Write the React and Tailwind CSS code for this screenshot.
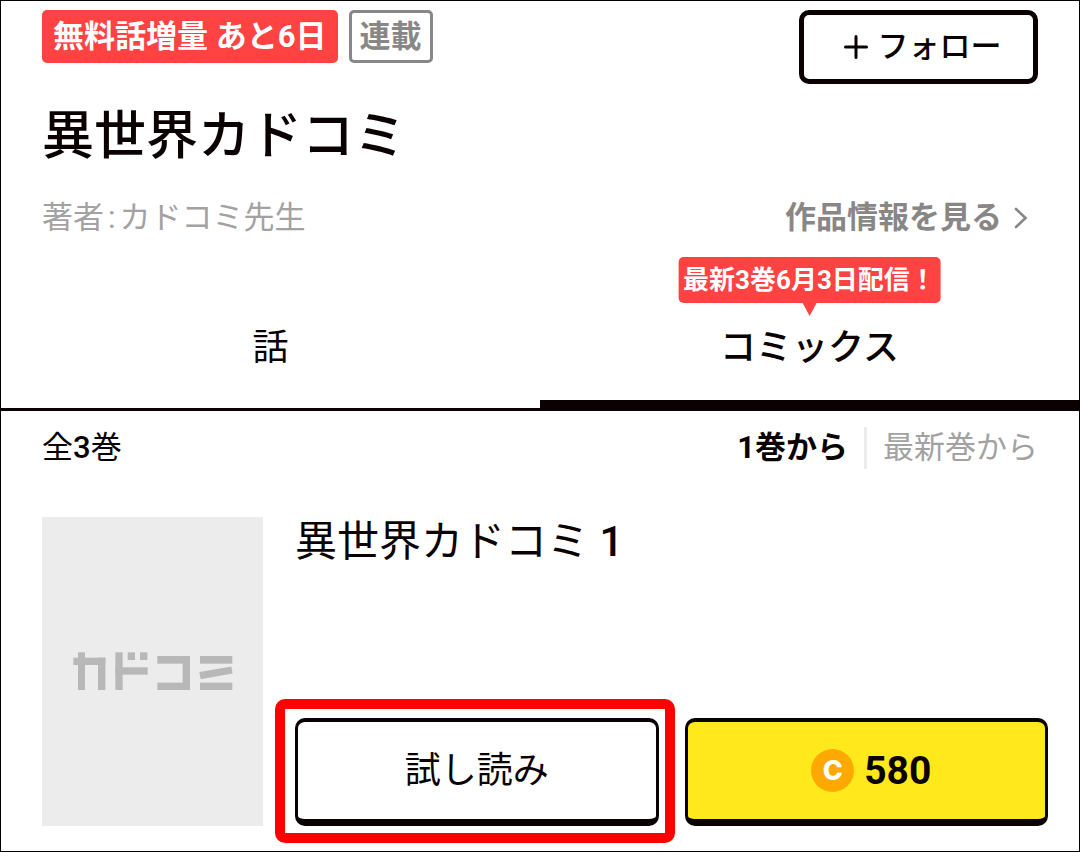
import { useState } from "react";

const CoverLogo = () => (
  <svg viewBox="128 69 480 115" className="w-[160px]" fill="#b9b8b8" role="img" aria-label="カドコミ">
    <rect x="143" y="70" width="21" height="113" />
    <rect x="129" y="86" width="96" height="22" />
    <rect x="203" y="86" width="22" height="97" />
    <rect x="255" y="70" width="22" height="113" />
    <rect x="255" y="115" width="97" height="22" />
    <rect x="292" y="70" width="22" height="23" />
    <rect x="329" y="70" width="22" height="23" />
    <rect x="381" y="81" width="98" height="23" />
    <rect x="457" y="81" width="22" height="102" />
    <rect x="381" y="161" width="98" height="22" />
    <rect x="509" y="81" width="97" height="23" />
    <line x1="509" y1="140" x2="605" y2="123" stroke="#b9b8b8" strokeWidth="22" />
    <rect x="509" y="161" width="97" height="22" />
  </svg>
);

const CoinIcon = () => (
  <span className="flex size-[43px] items-center justify-center rounded-full bg-[#ffa900] font-[Inter,sans-serif] text-[27px] leading-none font-extrabold text-white">
    C
  </span>
);

const Header = () => {
  const [following, setFollowing] = useState(false);

  return (
    <header className="px-[41px] pt-[9px]">
      <div className="flex items-start justify-between">
        <div>
          <div className="flex gap-[11px] text-[31px] leading-[53px] font-bold">
            <span className="rounded-[5px] bg-[#ff4343] px-[11px] text-white">無料話増量 あと6日</span>
            <span className="rounded-[5px] border-3 border-[#898686] px-2 leading-[47px] text-[#898686]">連載</span>
          </div>
          <h1 className="mt-11 text-[52px] leading-[60px] font-medium">異世界カドコミ</h1>
        </div>
        <button
          type="button"
          aria-pressed={following}
          onClick={() => setFollowing(!following)}
          className="flex h-[74px] w-[239px] items-center justify-center gap-[10px] rounded-[10px] border-5 border-[#0a0202] pl-2 text-[31px] leading-[40px] font-medium"
        >
          <svg viewBox="0 0 24 24" className="size-6" stroke="currentColor" strokeWidth="3" strokeLinecap="round">
            <path d="M12 1.5v21M1.5 12h21" />
          </svg>
          フォロー
        </button>
      </div>
      <div className="mt-[31px] flex items-center justify-between text-[31px] leading-[40px]">
        <p className="flex gap-1 text-[#a3a1a1]">
          <span>著者</span>
          <span>:</span>
          <span>カドコミ先生</span>
        </p>
        <a href="#info" className="flex items-center gap-3 pr-[10px] font-bold text-[#898686]">
          作品情報を見る
          <svg viewBox="0 0 14 24" className="h-6 w-[14px]" fill="none" stroke="currentColor" strokeWidth="2.6" strokeLinecap="round">
            <path d="M2 3l9.5 9L2 21" />
          </svg>
        </a>
      </div>
    </header>
  );
};

const Tabs = () => (
  <nav className="grid grid-cols-2 text-center text-[36px] leading-[50px]">
    <a href="#episodes" className="border-b-3 border-[#0a0202] pt-[85px]">話</a>
    <a href="#comics" className="relative border-b-11 border-[#0a0202] pt-[85px] pb-[27px] font-medium">
      <span className="absolute top-[19px] left-1/2 -translate-x-1/2 rounded-[5px] bg-[#ff4343] px-[5px] text-[26px] leading-[46px] font-bold whitespace-nowrap text-white">
        最新3巻6月3日配信！
        <svg viewBox="0 0 14 13" className="absolute top-full left-1/2 h-[13px] w-[14px] -translate-x-1/2" fill="#ff4343">
          <path d="M0 0h14L7 13z" />
        </svg>
      </span>
      コミックス
    </a>
  </nav>
);

const SortBar = () => {
  const [order, setOrder] = useState("first");

  return (
    <div className="flex items-center justify-between px-[41px] pt-4 text-[31px] leading-[42px]">
      <p>
        全<span className="font-medium">3</span>巻
      </p>
      <div className="flex">
        <button
          type="button"
          onClick={() => setOrder("first")}
          className={order === "first" ? "pr-4 font-bold" : "pr-4 text-[#a3a1a1]"}
        >
          1巻から
        </button>
        <button
          type="button"
          onClick={() => setOrder("latest")}
          className={order === "latest" ? "border-l-3 border-[#ebebeb] pl-4 font-bold" : "border-l-3 border-[#ebebeb] pl-4 text-[#a3a1a1]"}
        >
          最新巻から
        </button>
      </div>
    </div>
  );
};

const Volume = ({ title, number, price }) => (
  <article className="mt-12 flex gap-8 pr-[31px] pb-[25px] pl-[41px]">
    <div className="flex h-[309px] w-[221px] shrink-0 items-center justify-center bg-[#ececec]">
      <CoverLogo />
    </div>
    <div className="flex flex-1 flex-col justify-between">
      <h2 className="text-[42px] leading-[50px]">
        {title} <span className="font-medium">{number}</span>
      </h2>
      <div className="grid grid-cols-2 gap-[26px]">
        <div className="relative">
          <button
            type="button"
            className="h-[108px] w-full rounded-[10px] border-x-3 border-t-4 border-b-7 border-[#0a0202] bg-white text-[36px] leading-[50px]"
          >
            試し読み
          </button>
          <div className="pointer-events-none absolute -top-[19px] -right-4 -bottom-[17px] -left-5 rounded-[10px] border-10 border-[#ff0000]" />
        </div>
        <button
          type="button"
          className="flex h-[108px] items-center justify-center gap-[10px] rounded-[10px] border-x-3 border-t-4 border-b-7 border-[#0a0202] bg-[#ffe81c] pl-[10px] text-[39px] leading-[50px] font-bold"
        >
          <CoinIcon />
          {price}
        </button>
      </div>
    </div>
  </article>
);

const App = () => (
  <main className="min-h-screen border border-black bg-white font-[Roboto,'Noto_Sans_CJK_JP',sans-serif] text-[#0a0202]">
    <Header />
    <Tabs />
    <SortBar />
    <Volume title="異世界カドコミ" number={1} price={580} />
  </main>
);

export default App;
